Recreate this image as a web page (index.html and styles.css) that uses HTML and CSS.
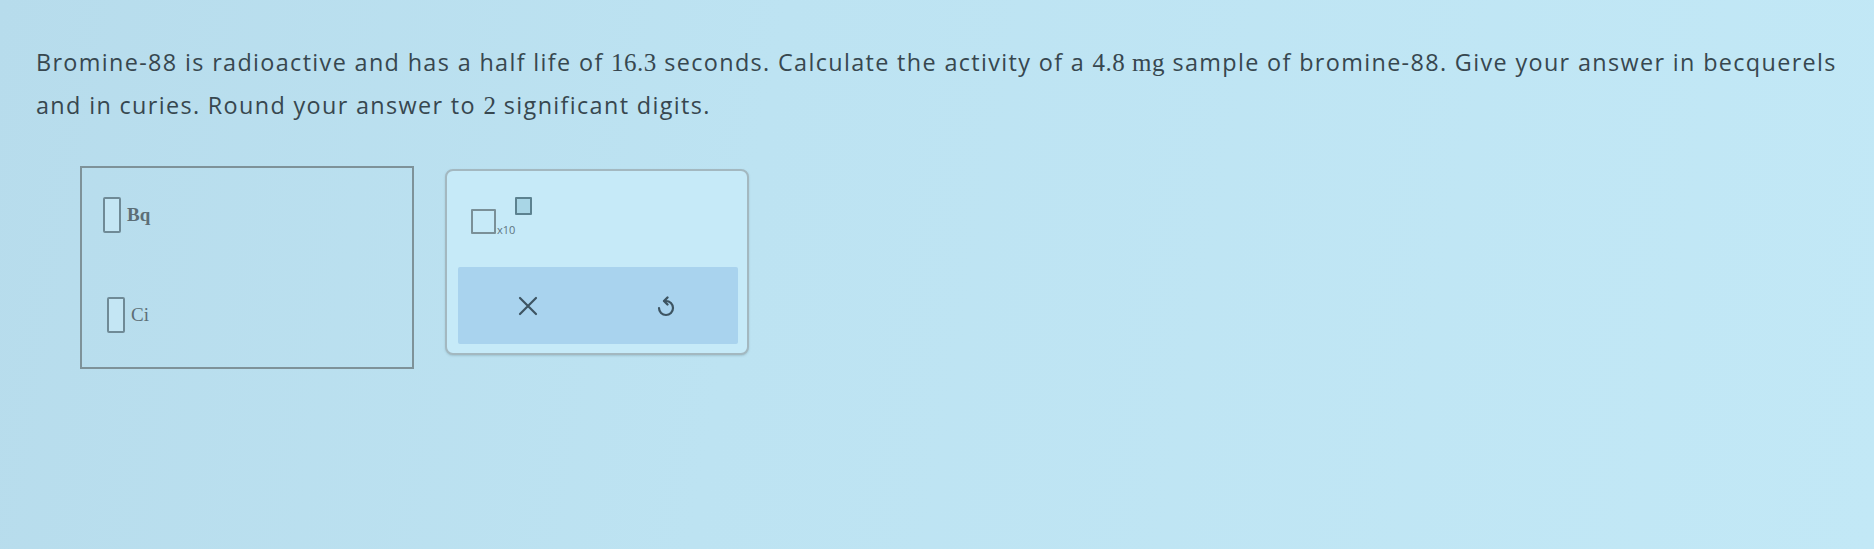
FILE: index.html
```html
<!DOCTYPE html>
<html>
<head>
<meta charset="utf-8">
<link rel="stylesheet" href="styles.css">
</head>
<body>
<div class="page">
  <p class="question">Bromine-88 is radioactive and has a half life of <span class="m">16.3</span> seconds. Calculate the activity of a <span class="m">4.8 mg</span> sample of bromine-88. Give your answer in becquerels<br>and in curies. Round your answer to <span class="m">2</span> significant digits.</p>
  <div class="answers">
    <div class="answer-box">
      <div class="row"><span class="slot"></span><span class="unit">Bq</span></div>
      <div class="row row-ci"><span class="slot"></span><span class="unit">Ci</span></div>
    </div>
    <div class="tool-panel">
      <div class="sci">
        <span class="sci-base"></span><span class="sci-x">x10</span><span class="sci-exp"></span>
      </div>
      <div class="actions">
        <span class="btn">
          <svg width="22" height="22" viewBox="0 0 22 22"><path d="M3 3 L19 19 M19 3 L3 19" stroke="#3d5462" stroke-width="2.2" stroke-linecap="round" fill="none"/></svg>
        </span>
        <span class="btn">
          <svg width="22" height="24" viewBox="0 0 22 24"><path d="M9.5 7 L11 7 A7 7 0 1 1 4 14" stroke="#3d5462" stroke-width="2.2" stroke-linecap="round" fill="none"/><path d="M12.5 3.5 L9 7 L12.5 10.5" stroke="#3d5462" stroke-width="2.4" stroke-linecap="round" stroke-linejoin="round" fill="none"/></svg>
        </span>
      </div>
    </div>
  </div>
</div>
</body>
</html>
```

FILE: styles.css
```css
html, body {
  margin: 0;
  padding: 0;
}
body {
  width: 1874px;
  height: 549px;
  overflow: hidden;
  background: linear-gradient(100deg, #b7dcec 0%, #bde3f2 40%, #c2e8f6 100%);
  font-family: "Open Sans", "DejaVu Sans", sans-serif;
  color: #37474f;
}
.page {
  padding: 41px 0 0 36px;
}
.question {
  margin: 0;
  font-size: 23.4px;
  font-weight: 500;
  line-height: 43px;
  letter-spacing: 1.35px;
  white-space: nowrap;
}
.m {
  font-family: "Liberation Serif", "DejaVu Serif", serif;
  font-size: 25px;
  letter-spacing: 0.5px;
}
.answers {
  display: flex;
  align-items: flex-start;
  gap: 31px;
  margin-top: 39px;
  margin-left: 44px;
}
.answer-box {
  width: 334px;
  height: 203px;
  border: 2px solid #7e9299;
  display: flex;
  flex-direction: column;
  padding: 29px 0 0 21px;
  box-sizing: border-box;
  gap: 64px;
}
.row {
  display: flex;
  align-items: center;
  gap: 6px;
}
.row-ci {
  padding-left: 4px;
}
.slot {
  width: 14px;
  height: 32px;
  border: 2px solid #6f8a96;
  border-radius: 2px;
  background: #c4e6f4;
}
.unit {
  font-family: "Liberation Serif", "DejaVu Serif", serif;
  font-size: 19px;
  font-weight: bold;
  color: #5c6e76;
}
.row-ci .unit {
  font-weight: normal;
}
.tool-panel {
  margin-top: 3px;
  width: 304px;
  height: 186px;
  border: 2px solid #a3b8c0;
  border-radius: 8px;
  box-sizing: border-box;
  background: #c6eaf8;
  display: flex;
  flex-direction: column;
  padding: 0 9px 9px 11px;
  box-shadow: 0 1px 2px rgba(80, 110, 120, 0.25);
}
.sci {
  display: flex;
  align-items: flex-start;
  height: 96px;
  padding: 26px 0 0 13px;
  box-sizing: border-box;
}
.sci-base {
  width: 21px;
  height: 21px;
  border: 2px solid #7a9098;
  border-radius: 1px;
  margin-top: 12px;
}
.sci-x {
  font-size: 11px;
  color: #5d7480;
  margin-top: 25px;
  margin-left: 1px;
}
.sci-exp {
  width: 13px;
  height: 14px;
  border: 2px solid #5c8290;
  border-radius: 1px;
  background: #a9d6e6;
}
.actions {
  flex: 1;
  background: #a9d3ee;
  border-radius: 2px;
  display: flex;
  align-items: center;
  gap: 98px;
  padding-left: 50px;
}
.btn {
  display: flex;
  align-items: center;
  justify-content: center;
  width: 40px;
  height: 40px;
}
```
